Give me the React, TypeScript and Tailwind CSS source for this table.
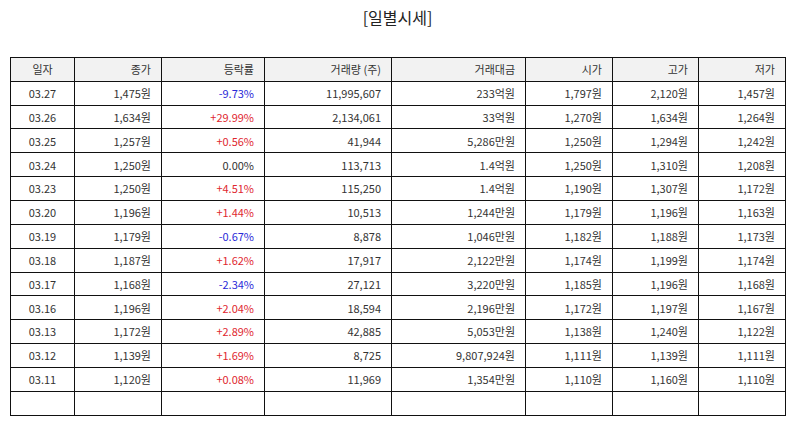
const rows = [
  ["03.27", "1,475원", "-9.73%", "11,995,607", "233억원", "1,797원", "2,120원", "1,457원"],
  ["03.26", "1,634원", "+29.99%", "2,134,061", "33억원", "1,270원", "1,634원", "1,264원"],
  ["03.25", "1,257원", "+0.56%", "41,944", "5,286만원", "1,250원", "1,294원", "1,242원"],
  ["03.24", "1,250원", "0.00%", "113,713", "1.4억원", "1,250원", "1,310원", "1,208원"],
  ["03.23", "1,250원", "+4.51%", "115,250", "1.4억원", "1,190원", "1,307원", "1,172원"],
  ["03.20", "1,196원", "+1.44%", "10,513", "1,244만원", "1,179원", "1,196원", "1,163원"],
  ["03.19", "1,179원", "-0.67%", "8,878", "1,046만원", "1,182원", "1,188원", "1,173원"],
  ["03.18", "1,187원", "+1.62%", "17,917", "2,122만원", "1,174원", "1,199원", "1,174원"],
  ["03.17", "1,168원", "-2.34%", "27,121", "3,220만원", "1,185원", "1,196원", "1,168원"],
  ["03.16", "1,196원", "+2.04%", "18,594", "2,196만원", "1,172원", "1,197원", "1,167원"],
  ["03.13", "1,172원", "+2.89%", "42,885", "5,053만원", "1,138원", "1,240원", "1,122원"],
  ["03.12", "1,139원", "+1.69%", "8,725", "9,807,924원", "1,111원", "1,139원", "1,111원"],
  ["03.11", "1,120원", "+0.08%", "11,969", "1,354만원", "1,110원", "1,160원", "1,110원"],
];

const headers = ["일자", "종가", "등락률", "거래량 (주)", "거래대금", "시가", "고가", "저가"];
const widths = ["w-[64px]", "w-[87px]", "w-[103px]", "w-[127px]", "w-[134px]", "w-[87px]", "w-[86px]", "w-[87px]"];

function rateColor(v: string) {
  if (v.startsWith("+")) return "text-[#e0272f]";
  if (v.startsWith("-")) return "text-[#2a2ad8]";
  return "text-[#333]";
}

export default function App() {
  return (
    <div className="w-[795px] h-[425px] bg-white font-['Noto_Sans_CJK_KR','Noto_Sans',sans-serif] text-[#333]">
      <h1 className="pt-[5px] h-[57px] text-center text-[16px] text-[#222] leading-[24px]">[일별시세]</h1>
      <table className="ml-[10px] w-[776px] table-fixed border-collapse text-[11px]">
        <colgroup>
          {widths.map((w, i) => (
            <col key={i} className={w} />
          ))}
        </colgroup>
        <thead>
          <tr className="h-[23.8px] bg-[#f2f2f2]">
            {headers.map((h, i) => (
              <th
                key={h}
                className={`border border-[#111] font-normal px-[10px] ${i === 0 ? "text-center" : "text-right"}`}
              >
                {h}
              </th>
            ))}
          </tr>
        </thead>
        <tbody>
          {rows.map((r) => (
            <tr key={r[0]} className="h-[23.85px]">
              {r.map((c, i) => (
                <td
                  key={i}
                  className={`border border-[#111] px-[10px] ${i === 0 ? "text-center" : "text-right"} ${i === 2 ? rateColor(c) : ""}`}
                >
                  {c}
                </td>
              ))}
            </tr>
          ))}
          <tr className="h-[23.85px]">
            {headers.map((h) => (
              <td key={h} className="border border-[#111]" />
            ))}
          </tr>
        </tbody>
      </table>
    </div>
  );
}
